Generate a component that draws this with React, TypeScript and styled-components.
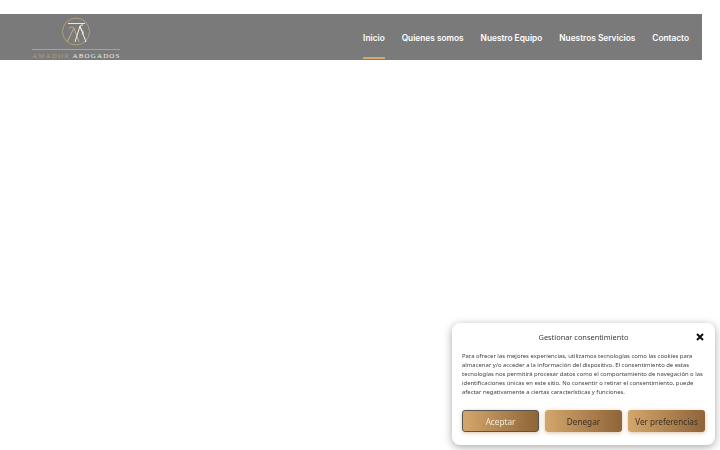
import { FC } from 'react'
import styled, { createGlobalStyle } from 'styled-components'

const GlobalStyle = createGlobalStyle`
  html, body {
    margin: 0;
    padding: 0;
    background: #ffffff;
  }
  body {
    font-family: "Noto Sans", sans-serif;
    overflow: hidden;
  }
`

const Page = styled.div`
  width: 720px;
  height: 450px;
  padding-top: 14px;
  box-sizing: border-box;
`

const Header = styled.header`
  width: 702px;
  height: 46px;
  background: #7a7a7a;
  display: flex;
  justify-content: space-between;
  overflow: hidden;
`

const LogoBox = styled.div`
  margin-left: 32px;
  width: 88px;
  display: flex;
  flex-direction: column;
  align-items: center;
  padding-top: 3px;
`

const LogoText = styled.div`
  width: 100%;
  margin-top: 3px;
  padding-top: 2px;
  border-top: 1px solid #a9a396;
  font-family: "Liberation Serif", serif;
  font-size: 7px;
  line-height: 8px;
  letter-spacing: 1.15px;
  color: #f1efe9;
  white-space: nowrap;
  text-align: center;
`

const LogoGold = styled.span`
  color: #b29f78;
`

const Nav = styled.nav`
  display: flex;
  gap: 17px;
  padding-right: 13px;
`

const NavItem = styled.a<{ $active?: boolean }>`
  height: 45px;
  box-sizing: border-box;
  padding-top: 17px;
  font-family: "Inter", sans-serif;
  font-size: 8.3px;
  line-height: 14px;
  font-weight: 600;
  color: #ffffff;
  white-space: nowrap;
  border-bottom: 2px solid ${({ $active }) => ($active ? '#d5a86c' : 'transparent')};
`

const Modal = styled.section`
  position: fixed;
  left: 452px;
  top: 323px;
  width: 263px;
  height: 122px;
  box-sizing: border-box;
  background: #ffffff;
  border-radius: 8px;
  box-shadow: 0 2px 8px rgba(0, 0, 0, 0.35);
  padding: 8px 10px 0;
  display: flex;
  flex-direction: column;
`

const ModalHead = styled.div`
  display: flex;
  align-items: center;
  justify-content: center;
  height: 12px;
  position: relative;
`

const ModalTitle = styled.h2`
  margin: 0;
  font-family: "Noto Sans", sans-serif;
  font-size: 7.4px;
  font-weight: 400;
  line-height: 12px;
  color: #3c3c3c;
`

const CloseIcon = styled.svg`
  position: absolute;
  right: 1px;
  top: 2px;
`

const ModalText = styled.p`
  margin: 9px 0 0;
  font-family: "Noto Sans", sans-serif;
  font-size: 5.9px;
  line-height: 9px;
  color: #3f3f3f;
  white-space: nowrap;
`

const Buttons = styled.div`
  display: grid;
  grid-template-columns: repeat(3, 77px);
  gap: 6px;
  margin-top: 13px;
`

const Button = styled.button<{ $primary?: boolean }>`
  height: 22px;
  padding: 0;
  border: ${({ $primary }) => ($primary ? '1px solid #555555' : 'none')};
  border-radius: 3px;
  background: linear-gradient(90deg, #d3a76c 0%, #8f6437 100%);
  box-shadow: 0 1px 4px rgba(160, 110, 50, 0.4);
  font-family: "Noto Sans", sans-serif;
  font-size: 8.2px;
  color: ${({ $primary }) => ($primary ? '#f6ead9' : '#3c3024')};
`

const navItems = ['Inicio', 'Quienes somos', 'Nuestro Equipo', 'Nuestros Servicios', 'Contacto']

const App: FC = () => {
  return (
    <Page>
      <GlobalStyle />
      <Header>
        <LogoBox>
          <svg width="30" height="29" viewBox="0 0 30 29" fill="none">
            <circle cx="15" cy="14.5" r="13.5" stroke="#b29f78" strokeWidth="1" />
            <path d="M7 6.5h17" stroke="#e8e6e0" strokeWidth="1" />
            <path d="M6 25L13 11L18 25" stroke="#c2ad80" strokeWidth="1" />
            <path d="M8 11.5c2-2 5-1.5 5 0" stroke="#c2ad80" strokeWidth="1" />
            <path d="M14 25L19 9L25 25" stroke="#f4f2ee" strokeWidth="1" />
            <path d="M22 8c-3 0-4.5 2-2 4.5s3 3 1 5" stroke="#f4f2ee" strokeWidth="1" />
          </svg>
          <LogoText>
            <LogoGold>AMADOR</LogoGold> ABOGADOS
          </LogoText>
        </LogoBox>
        <Nav>
          {navItems.map((item, index) => (
            <NavItem key={item} $active={index === 0}>
              {item}
            </NavItem>
          ))}
        </Nav>
      </Header>
      <Modal>
        <ModalHead>
          <ModalTitle>Gestionar consentimiento</ModalTitle>
          <CloseIcon width="8" height="8" viewBox="0 0 8 8">
            <path d="M1 1L7 7M7 1L1 7" stroke="#111111" strokeWidth="2" />
          </CloseIcon>
        </ModalHead>
        <ModalText>
          Para ofrecer las mejores experiencias, utilizamos tecnologías como las cookies para
          <br />
          almacenar y/o acceder a la información del dispositivo. El consentimiento de estas
          <br />
          tecnologías nos permitirá procesar datos como el comportamiento de navegación o las
          <br />
          identificaciones únicas en este sitio. No consentir o retirar el consentimiento, puede
          <br />
          afectar negativamente a ciertas características y funciones.
        </ModalText>
        <Buttons>
          <Button $primary>Aceptar</Button>
          <Button>Denegar</Button>
          <Button>Ver preferencias</Button>
        </Buttons>
      </Modal>
    </Page>
  )
}

export default App
